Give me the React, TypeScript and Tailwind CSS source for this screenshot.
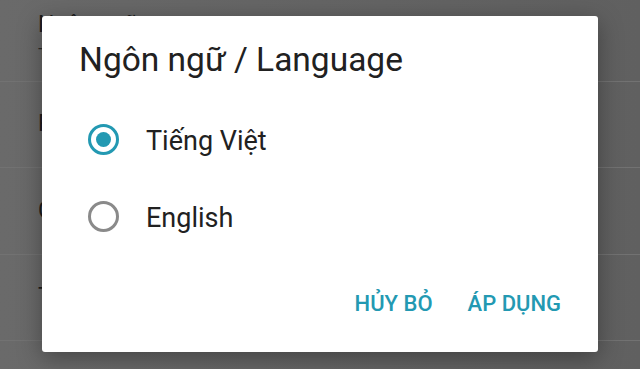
import React, { useState } from 'react';

const LANGS = [
  { id: 'vi', label: 'Tiếng Việt' },
  { id: 'en', label: 'English' },
];

// settings list sitting behind the scrim
const ROWS = [
  { title: 'Ngôn ngữ', sub: 'Tiếng Việt' },
  { title: 'Phông chữ' },
  { title: 'Chính sách' },
  { title: 'Thông tin' },
];

const Radio: React.FC<{ checked: boolean }> = ({ checked }) => (
  <span
    className={
      checked
        ? 'flex h-[31px] w-[31px] shrink-0 items-center justify-center rounded-full border-[3.5px] border-[#2399b2]'
        : 'flex h-[31px] w-[31px] shrink-0 items-center justify-center rounded-full border-[3px] border-[#8a8a8a]'
    }
  >
    {checked && <span className="h-[15px] w-[15px] rounded-full bg-[#2399b2]" />}
  </span>
);

const App: React.FC = () => {
  const [lang, setLang] = useState('vi');

  return (
    <div
      className="relative h-[369px] w-[640px] overflow-hidden bg-gradient-to-r from-[#6a6a6a] to-[#606060]"
      style={{ fontFamily: 'Roboto, "Noto Sans", sans-serif' }}
    >
      {/* background list */}
      <div className="-mt-[5px] flex flex-col">
        {ROWS.map((r) => (
          <div
            key={r.title}
            className="flex h-[86.5px] flex-col justify-center border-b border-[#727272] pl-[38px] text-[#1c1c1c]"
          >
            <span className="text-[23px] leading-[26px]">{r.title}</span>
            {r.sub && <span className="mt-[6px] text-[17px] leading-[20px] text-[#2a2a2a]">{r.sub}</span>}
          </div>
        ))}
      </div>

      {/* dialog */}
      <div className="absolute left-[42px] top-[16px] flex h-[336px] w-[556px] flex-col rounded-[3px] bg-white shadow-[0_6px_24px_rgba(0,0,0,0.35)]">
        <h2 className="pl-[37px] pt-[24px] text-[33.5px] font-normal leading-[40px] text-[#212121]">
          Ngôn ngữ / Language
        </h2>

        <div className="mt-[21px] flex flex-col">
          {LANGS.map((l) => (
            <button
              key={l.id}
              type="button"
              onClick={() => setLang(l.id)}
              className="flex h-[77px] items-center pl-[46px] text-left"
            >
              <Radio checked={lang === l.id} />
              <span className="ml-[27px] pt-[2px] text-[27px] leading-[30px] text-[#212121]">{l.label}</span>
            </button>
          ))}
        </div>

        <div className="mt-auto flex justify-end gap-[35px] pb-[36px] pr-[37px]">
          <button type="button" className="text-[22px] font-medium leading-[24px] text-[#2399b2]">
            HỦY BỎ
          </button>
          <button type="button" className="text-[22px] font-medium leading-[24px] text-[#2399b2]">
            ÁP DỤNG
          </button>
        </div>
      </div>
    </div>
  );
};

export default App;
